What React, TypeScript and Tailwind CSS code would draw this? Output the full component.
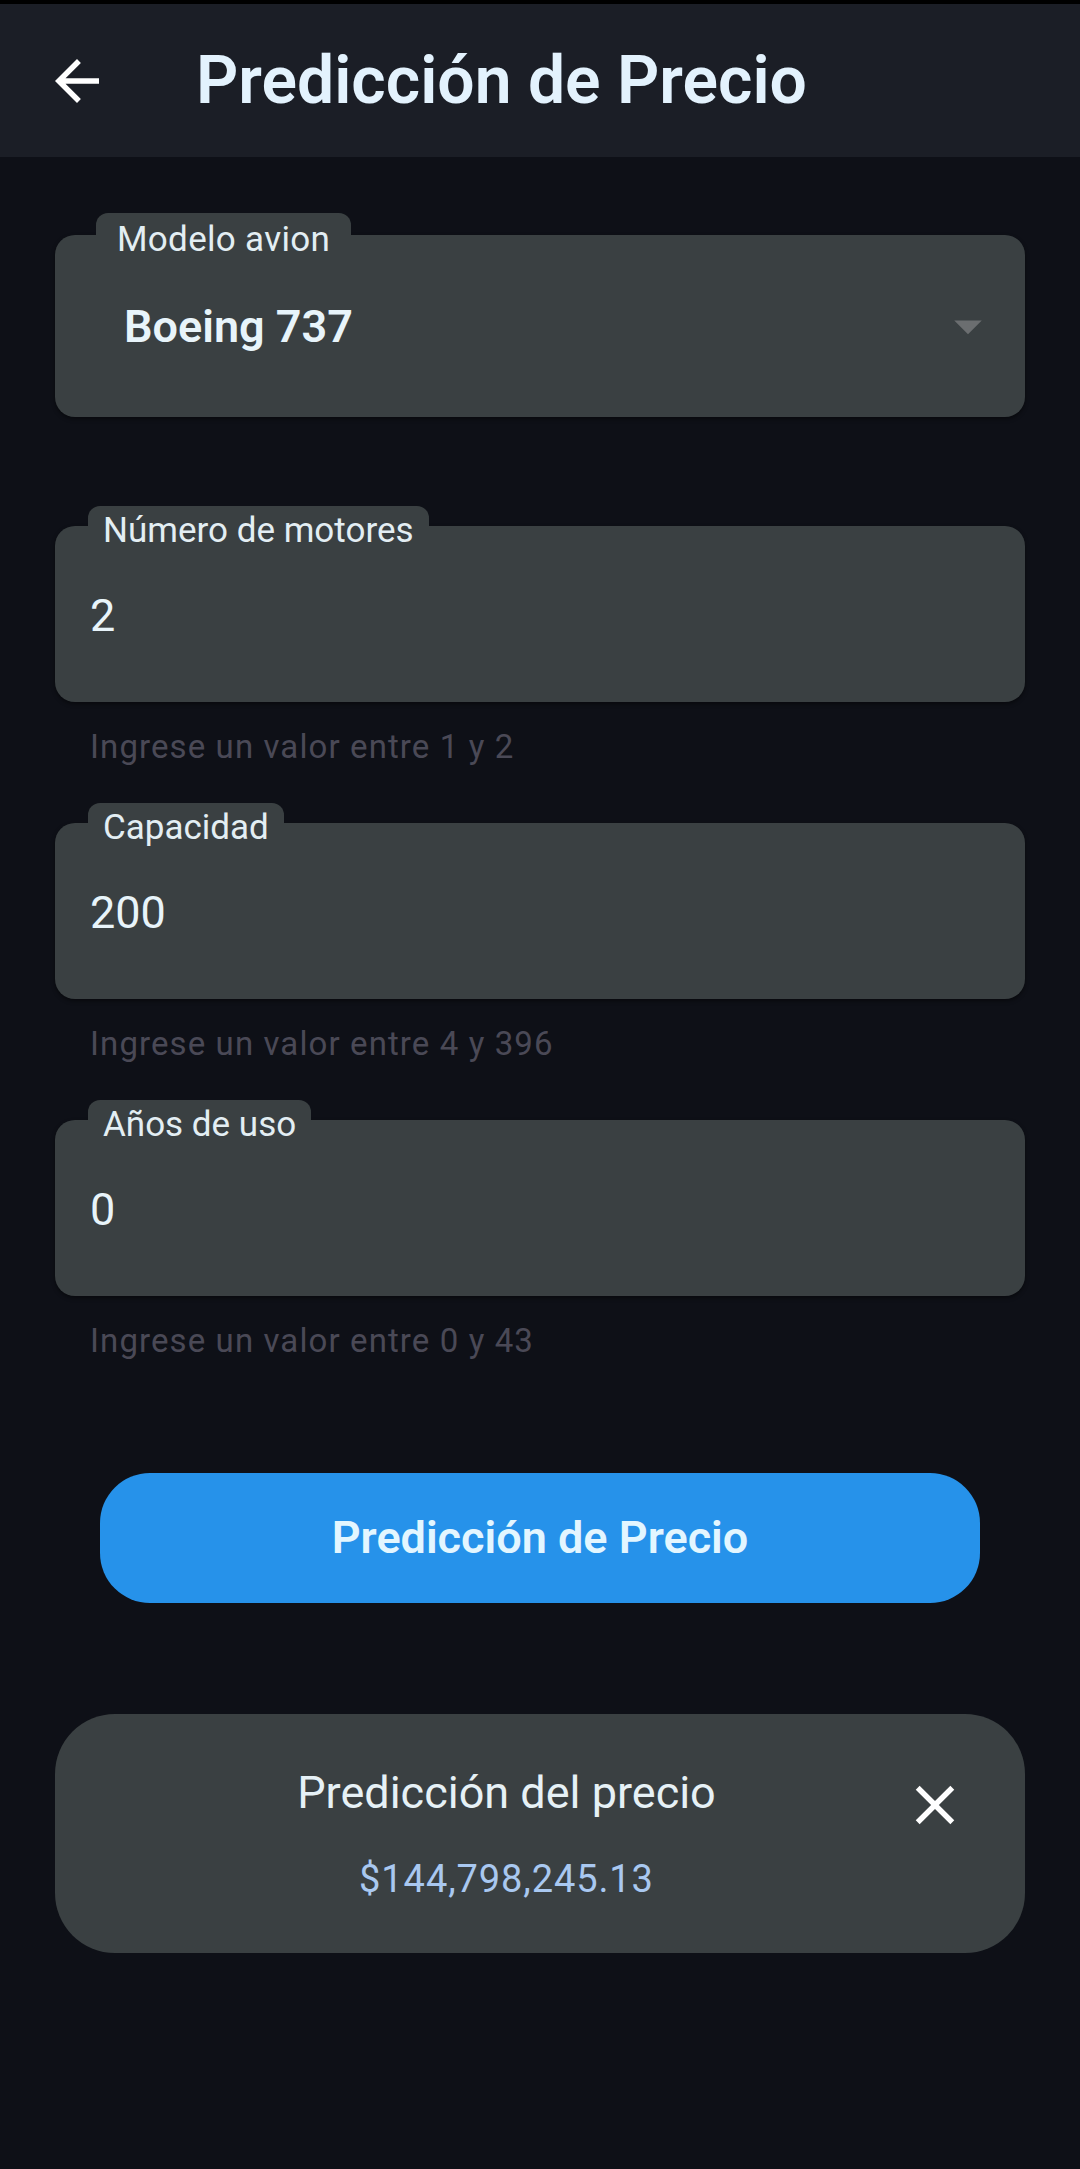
import React from "react"

function BackArrow() {
    return (
        <svg viewBox="0 0 24 24" className="w-[66px] h-[66px]" fill="#ffffff">
            <path d="M20 11H7.83l5.59-5.59L12 4l-8 8 8 8 1.41-1.41L7.83 13H20v-2z" />
        </svg>
    )
}

function CloseIcon() {
    return (
        <svg viewBox="0 0 24 24" className="w-[66px] h-[66px]" fill="#ffffff">
            <path d="M19 6.41L17.59 5 12 10.59 6.41 5 5 6.41 10.59 12 5 17.59 6.41 19 12 13.41 17.59 19 19 17.59 13.41 12z" />
        </svg>
    )
}

function DropArrow() {
    return (
        <svg viewBox="0 0 24 24" className="w-[66px] h-[66px]" fill="#6b6e70">
            <path d="M7 10l5 5 5-5z" />
        </svg>
    )
}

type FieldProps = {
    label: string
    value: string
    helper: string
}

function NumberField({ label, value, helper }: FieldProps) {
    return (
        <div className="flex flex-col">
            <div className="relative mt-[20px]">
                <div className="absolute -top-[20px] left-[33px] bg-[#3a4042] rounded-t-[12px] px-[15px] pt-[3px]">
                    <span className="block text-[35px] leading-[44px] text-[#e3eef3]">{label}</span>
                </div>
                <div className="h-[176px] rounded-[20px] bg-[#3a4042] shadow-[0_2px_4px_rgba(0,0,0,0.45)] flex items-center pl-[35px] pt-[3px]">
                    <span className="text-[45px] leading-[53px] text-[#e8f4fa]">{value}</span>
                </div>
            </div>
            <p className="pl-[35px] mt-[25px] text-[33px] leading-[40px] tracking-[1.1px] text-[#4a4956]">{helper}</p>
        </div>
    )
}

export default function App() {
    return (
        <div className="min-h-screen bg-[#0e1017] font-['Roboto',sans-serif]">
            <div className="h-[4px] bg-black" />
            <header className="h-[153px] bg-[#1b1e26] flex items-center pl-[44px]">
                <BackArrow />
                <h1 className="ml-[86px] text-[66px] leading-[76px] font-semibold text-[#e3f2fd]">Predicción de Precio</h1>
            </header>

            <main className="px-[55px]">
                {/* selector de modelo */}
                <div className="relative mt-[78px]">
                    <div className="absolute -top-[22px] left-[41px] bg-[#3a4042] rounded-t-[12px] px-[21px] pt-[5px]">
                        <span className="block text-[35px] leading-[44px] tracking-[0.3px] text-[#e3eef3]">Modelo avion</span>
                    </div>
                    <div className="h-[182px] rounded-[20px] bg-[#3a4042] shadow-[0_2px_4px_rgba(0,0,0,0.45)] flex items-center justify-between pl-[69px] pr-[24px]">
                        <span className="text-[45px] leading-[53px] font-semibold text-[#e8f4fa]">Boeing 737</span>
                        <DropArrow />
                    </div>
                </div>

                <div className="mt-[89px] flex flex-col gap-[36px]">
                    <NumberField label="Número de motores" value="2" helper="Ingrese un valor entre 1 y 2" />
                    <NumberField label="Capacidad" value="200" helper="Ingrese un valor entre 4 y 396" />
                    <NumberField label="Años de uso" value="0" helper="Ingrese un valor entre 0 y 43" />
                </div>

                <div className="px-[45px] mt-[112px]">
                    <button className="w-full h-[130px] rounded-[50px] bg-[#2692ea] flex items-center justify-center">
                        <span className="text-[45px] leading-[52px] font-semibold text-[#e3f6ff]">Predicción de Precio</span>
                    </button>
                </div>

                <div className="mt-[111px] h-[239px] rounded-[60px] bg-[#3a4042] flex items-start pl-[56px] pr-[57px] pt-[52px]">
                    <div className="flex-1 flex flex-col items-center">
                        <span className="text-[45px] leading-[54px] text-[#e6f1f6]">Predicción del precio</span>
                        <span className="mt-[36px] text-[38px] leading-[46px] tracking-[0.9px] text-[#a9c8f0]">$144,798,245.13</span>
                    </div>
                    <div className="mt-[6px]">
                        <CloseIcon />
                    </div>
                </div>
            </main>
        </div>
    )
}
